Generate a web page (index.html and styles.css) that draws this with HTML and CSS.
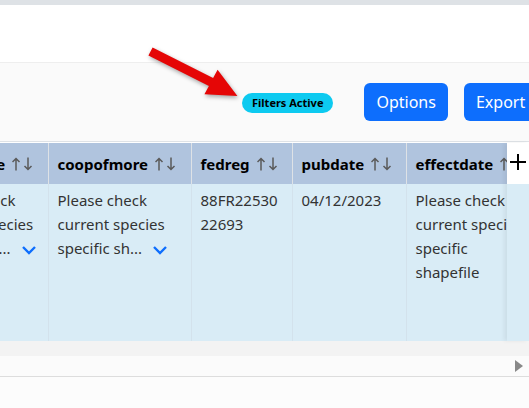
FILE: index.html
```html
<!DOCTYPE html>
<html lang="en">
<head>
    <meta charset="UTF-8">
    <meta name="viewport" content="width=device-width, initial-scale=1.0">
    <title>Species Records</title>
    <link rel="stylesheet" href="styles.css">
</head>
<body>
    <div class="topbar"></div>
    <div class="titlebar"></div>

    <!-- Toolbar -->
    <div class="toolbar">
        <svg class="pointer" width="110" height="70" viewBox="140 40 110 70">
            <polygon points="152.6,47.5 213.1,78 217.6,69.7 237.4,96.1 204.4,94.3 208.9,86 148.4,55.5" fill="#e50606"/>
        </svg>
        <span class="badge">Filters Active</span>
        <button class="btn">Options</button>
        <button class="btn">Export</button>
    </div>

    <!-- Records grid -->
    <div class="grid">
        <div class="grid-scroll">
            <table class="records">
                <colgroup>
                    <col class="w-1">
                    <col class="w-2">
                    <col class="w-3">
                    <col class="w-4">
                    <col class="w-5">
                </colgroup>
                <thead>
                    <tr>
                        <th>coopofone<svg class="sort" width="22" height="14" viewBox="0 0 22 14"><path d="M4 13.5V1.5M0.5 5L4 1.5L7.5 5M16 0.5V12.5M12.5 9L16 12.5L19.5 9" fill="none" stroke="#5a5a5a" stroke-width="1.5"/></svg></th>
                        <th>coopofmore<svg class="sort" width="22" height="14" viewBox="0 0 22 14"><path d="M4 13.5V1.5M0.5 5L4 1.5L7.5 5M16 0.5V12.5M12.5 9L16 12.5L19.5 9" fill="none" stroke="#5a5a5a" stroke-width="1.5"/></svg></th>
                        <th>fedreg<svg class="sort" width="22" height="14" viewBox="0 0 22 14"><path d="M4 13.5V1.5M0.5 5L4 1.5L7.5 5M16 0.5V12.5M12.5 9L16 12.5L19.5 9" fill="none" stroke="#5a5a5a" stroke-width="1.5"/></svg></th>
                        <th>pubdate<svg class="sort" width="22" height="14" viewBox="0 0 22 14"><path d="M4 13.5V1.5M0.5 5L4 1.5L7.5 5M16 0.5V12.5M12.5 9L16 12.5L19.5 9" fill="none" stroke="#5a5a5a" stroke-width="1.5"/></svg></th>
                        <th>effectdate<svg class="sort" width="22" height="14" viewBox="0 0 22 14"><path d="M4 13.5V1.5M0.5 5L4 1.5L7.5 5M16 0.5V12.5M12.5 9L16 12.5L19.5 9" fill="none" stroke="#5a5a5a" stroke-width="1.5"/></svg></th>
                    </tr>
                </thead>
                <tbody>
                    <tr>
                        <td>Please check current species specific sh... <span class="more"><svg width="16" height="10" viewBox="0 0 16 10"><path d="M2 2 L8 8 L14 2" fill="none" stroke="#0d6efd" stroke-width="2.4"/></svg></span></td>
                        <td>Please check current species specific sh... <span class="more"><svg width="16" height="10" viewBox="0 0 16 10"><path d="M2 2 L8 8 L14 2" fill="none" stroke="#0d6efd" stroke-width="2.4"/></svg></span></td>
                        <td class="code">88FR2253022693</td>
                        <td>04/12/2023</td>
                        <td>Please check current species specific shapefile</td>
                    </tr>
                </tbody>
            </table>
        </div>
        <div class="add-col">
            <div class="add-head">
                <svg width="16" height="16" viewBox="0 0 16 16"><path d="M8 0V16M0 8H16" stroke="black" stroke-width="2"/></svg>
            </div>
            <div class="add-body"></div>
        </div>
    </div>

    <div class="grid-foot"></div>
    <div class="hscroll">
        <span class="hscroll-arrow"></span>
    </div>
    <div class="footer"></div>
</body>
</html>
```

FILE: styles.css
```css
:root {
    --primary: #0d6efd;
    --info: #0dcaf0;
    --head-bg: #b0c4de;
    --row-bg: #d9ecf6;
    --line: #dee2e6;
}

* {
    margin: 0;
    padding: 0;
    box-sizing: border-box;
}

body {
    font-family: 'Noto Sans', 'Open Sans', sans-serif;
    color: #333;
    background: #fcfcfc;
    overflow: hidden;
}

.topbar {
    height: 5px;
    background: var(--line);
}

.titlebar {
    height: 58px;
    background: white;
    border-bottom: 1px solid #eee;
}

.toolbar {
    position: relative;
    height: 78px;
    background: #fafafa;
    display: flex;
    align-items: center;
    padding-left: 242px;
    white-space: nowrap;
}

.pointer {
    position: absolute;
    left: 140px;
    top: -23px;
    filter: drop-shadow(1px 2px 2px rgba(0,0,0,0.35));
}

.badge {
    display: inline-block;
    background: var(--info);
    color: black;
    font-size: 11px;
    font-weight: bold;
    line-height: 20px;
    padding: 0 10px;
    border-radius: 10px;
    margin-right: 31px;
    margin-top: 2px;
}

.btn {
    flex-shrink: 0;
    font-family: inherit;
    font-size: 16px;
    line-height: 24px;
    padding: 7px 12px;
    color: white;
    background: var(--primary);
    border: none;
    border-radius: 6px;
    margin-right: 16px;
    cursor: pointer;
}

.grid {
    position: relative;
    border-top: 1px solid var(--line);
    padding-top: 1px;
    background: white;
}

.grid-scroll {
    overflow: hidden;
}

.records {
    border-collapse: collapse;
    table-layout: fixed;
    width: 617px;
    margin-left: -83px;
}

.w-1 { width: 131px; }
.w-2 { width: 143px; }
.w-3 { width: 101px; }
.w-4 { width: 114px; }
.w-5 { width: 128px; }

.records th {
    background: var(--head-bg);
    color: black;
    font-size: 15px;
    font-weight: bold;
    text-align: left;
    white-space: nowrap;
    overflow: hidden;
    height: 41px;
    padding: 0 9px;
    border-right: 1px solid var(--line);
}

.sort {
    margin-left: 7px;
    vertical-align: -1px;
}

.records td {
    background: var(--row-bg);
    font-size: 15px;
    line-height: 24px;
    vertical-align: top;
    height: 157px;
    padding: 4px 9px;
    border-right: 1px solid #d3e2ec;
}

.records td.code {
    overflow-wrap: anywhere;
}

.more {
    display: inline-block;
    margin-left: 6px;
    vertical-align: -1px;
}

.add-col {
    position: absolute;
    top: 1px;
    right: 0;
    bottom: 0;
    width: 22px;
    display: flex;
    flex-direction: column;
    box-shadow: -3px 0 4px rgba(0,0,0,0.06);
}

.add-head {
    height: 41px;
    background: white;
    display: flex;
    align-items: center;
    justify-content: center;
    padding-bottom: 3px;
}

.add-body {
    flex: 1;
    background: var(--row-bg);
}

.grid-foot {
    height: 15px;
    background: #f3f3f3;
}

.hscroll {
    height: 21px;
    background: #fbfbfb;
    border-bottom: 1px solid #ddd;
    display: flex;
    justify-content: flex-end;
    align-items: center;
    padding-right: 6px;
}

.hscroll-arrow {
    width: 0;
    height: 0;
    border-top: 6px solid transparent;
    border-bottom: 6px solid transparent;
    border-left: 8px solid #888;
}

.footer {
    height: 40px;
    background: #fcfcfc;
}
```
